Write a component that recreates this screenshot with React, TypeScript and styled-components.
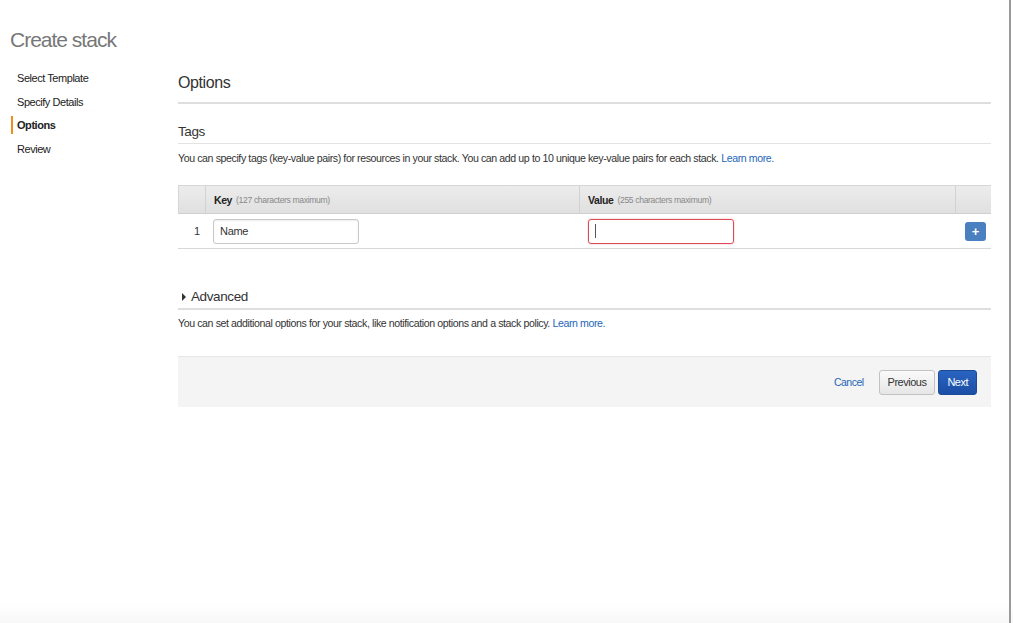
import styled, { createGlobalStyle } from 'styled-components';

const GlobalStyle = createGlobalStyle`
  html, body {
    margin: 0;
    padding: 0;
    background: #ffffff;
    font-family: "Liberation Sans", Arial, sans-serif;
    color: #333333;
  }
  * { box-sizing: border-box; }
`;

const Page = styled.div`
  width: 1013px;
  height: 623px;
  display: flex;
  overflow: hidden;
  background: linear-gradient(to bottom, #ffffff 0, #ffffff 604px, #f7f7f7 623px);
`;

const Content = styled.div`
  width: 1009px;
  padding: 26px 0 0 10px;
  display: flex;
  flex-direction: column;
`;

const Edge = styled.div`
  width: 2px;
  background: #9a9a9a;
`;

const PageTitle = styled.h1`
  margin: 0;
  font-size: 21px;
  font-weight: 300;
  color: #777777;
  letter-spacing: -1px;
  line-height: 28px;
`;

const Body = styled.div`
  display: flex;
  margin-top: 13px;
`;

const Nav = styled.nav`
  width: 168px;
  display: flex;
  flex-direction: column;
  gap: 5.7px;
  padding-top: 2px;
`;

const NavItem = styled.div<{ $active?: boolean }>`
  font-size: 11px;
  line-height: 18px;
  padding-left: 4px;
  border-left: 2px solid ${p => (p.$active ? '#f08d1b' : 'transparent')};
  margin-left: 1px;
  font-weight: ${p => (p.$active ? 700 : 400)};
  color: #222222;
  letter-spacing: -0.45px;
`;

const Main = styled.main`
  width: 813px;
  display: flex;
  flex-direction: column;
`;

const SectionTitle = styled.h2`
  margin: 5px 0 0;
  font-size: 16px;
  font-weight: 400;
  color: #333333;
  line-height: 22px;
  padding-bottom: 8px;
  border-bottom: 2px solid #dedede;
  letter-spacing: -0.4px;
`;

const SubTitle = styled.h3`
  margin: 18px 0 0;
  font-size: 13.5px;
  font-weight: 400;
  color: #333333;
  line-height: 20px;
  padding-bottom: 1px;
  border-bottom: 1px solid #e3e3e3;
  display: flex;
  align-items: center;
  gap: 5px;
  letter-spacing: -0.4px;
`;

const Caret = styled.span`
  width: 0;
  height: 0;
  border-top: 4px solid transparent;
  border-bottom: 4px solid transparent;
  border-left: 4px solid #333333;
  margin-left: 4px;
`;

const Help = styled.p<{ $gap?: number }>`
  margin: ${p => p.$gap ?? 7}px 0 0;
  font-size: 10.6px;
  line-height: 14px;
  color: #333333;
  letter-spacing: -0.4px;
`;

const Link = styled.a`
  color: #1f66b8;
  text-decoration: none;
`;

const Table = styled.div`
  margin-top: 20px;
  display: grid;
  grid-template-columns: 27px 374px 376px 36px;
`;

const HeadCell = styled.div`
  height: 29px;
  background: linear-gradient(to bottom, #ececec, #e0e0e0);
  border-top: 1px solid #d6d6d6;
  border-bottom: 1px solid #cfcfcf;
  border-left: 1px solid #d2d2d2;
  display: flex;
  align-items: center;
  padding-left: 8px;
  font-size: 10.5px;
  color: #222;
  &:first-child { border-left: 1px solid #d6d6d6; }
  &:last-child { border-right: 1px solid #d6d6d6; }
`;

const HeadLabel = styled.b`
  font-weight: 700;
  letter-spacing: -0.4px;
`;

const HeadHint = styled.span`
  color: #888;
  font-size: 8.6px;
  margin-left: 4px;
  letter-spacing: -0.35px;
`;

const Cell = styled.div<{ $align?: string; $pad?: number }>`
  height: 35px;
  border-bottom: 1px solid #d8d8d8;
  display: flex;
  align-items: center;
  justify-content: ${p => p.$align || 'flex-start'};
  padding: 0 8px 0 ${p => p.$pad ?? 8}px;
  font-size: 11px;
`;

const Index = styled(Cell)`
  justify-content: flex-end;
  padding: 0 5px 0 0;
`;

const Input = styled.div<{ $error?: boolean }>`
  width: 146px;
  height: 25px;
  border: 1px solid ${p => (p.$error ? '#dc4a55' : '#c8c8c8')};
  border-radius: 3px;
  box-shadow: ${p =>
    p.$error ? '0 0 2px rgba(220, 74, 85, 0.45)' : 'inset 0 1px 2px rgba(0, 0, 0, 0.08)'};
  display: flex;
  align-items: center;
  padding-left: 6px;
  font-size: 11px;
  letter-spacing: -0.3px;
  color: #333;
`;

const Cursor = styled.span`
  width: 1px;
  height: 14px;
  background: #555;
`;

const PlusButton = styled.button`
  width: 21px;
  height: 19px;
  border: none;
  border-radius: 3px;
  background: #4a7fc0;
  color: #fff;
  font-size: 13px;
  font-weight: 700;
  line-height: 19px;
  padding: 0;
  margin-right: -3px;
  font-family: "Liberation Sans", Arial, sans-serif;
`;

const AdvancedTitle = styled(SubTitle)`
  margin-top: 38px;
  padding-bottom: 1px;
  border-bottom: 2px solid #dedede;
`;

const Footer = styled.div`
  margin-top: 26px;
  height: 51px;
  background: #f4f4f4;
  border-top: 1px solid #e6e6e6;
  display: flex;
  align-items: center;
  justify-content: flex-end;
  padding-right: 14px;
  gap: 3px;
`;

const CancelLink = styled(Link)`
  font-size: 10.5px;
  margin-right: 12px;
  letter-spacing: -0.5px;
`;

const Button = styled.button<{ $primary?: boolean }>`
  height: 25px;
  padding: 0 8px;
  border-radius: 3px;
  font-family: "Liberation Sans", Arial, sans-serif;
  font-size: 11px;
  letter-spacing: -0.5px;
  border: 1px solid ${p => (p.$primary ? '#1a4a98' : '#c2c2c2')};
  background: ${p =>
    p.$primary
      ? 'linear-gradient(to bottom, #2a64c0, #1b4ea6)'
      : 'linear-gradient(to bottom, #fafafa, #e6e6e6)'};
  color: ${p => (p.$primary ? '#ffffff' : '#333333')};
`;

export default function App() {
  return (
    <>
      <GlobalStyle />
      <Page>
        <Content>
          <PageTitle>Create stack</PageTitle>
          <Body>
            <Nav>
              <NavItem>Select Template</NavItem>
              <NavItem>Specify Details</NavItem>
              <NavItem $active>Options</NavItem>
              <NavItem>Review</NavItem>
            </Nav>
            <Main>
              <SectionTitle>Options</SectionTitle>
              <SubTitle>Tags</SubTitle>
              <Help>
                You can specify tags (key-value pairs) for resources in your stack. You can add up to 10 unique
                key-value pairs for each stack. <Link href="#">Learn more.</Link>
              </Help>
              <Table>
                <HeadCell />
                <HeadCell>
                  <HeadLabel>Key</HeadLabel>
                  <HeadHint>(127 characters maximum)</HeadHint>
                </HeadCell>
                <HeadCell>
                  <HeadLabel>Value</HeadLabel>
                  <HeadHint>(255 characters maximum)</HeadHint>
                </HeadCell>
                <HeadCell />
                <Index>1</Index>
                <Cell>
                  <Input>Name</Input>
                </Cell>
                <Cell $pad={9}>
                  <Input $error>
                    <Cursor />
                  </Input>
                </Cell>
                <Cell $align="flex-end">
                  <PlusButton>+</PlusButton>
                </Cell>
              </Table>
              <AdvancedTitle>
                <Caret />
                Advanced
              </AdvancedTitle>
              <Help $gap={6}>
                You can set additional options for your stack, like notification options and a stack policy.{' '}
                <Link href="#">Learn more.</Link>
              </Help>
              <Footer>
                <CancelLink href="#">Cancel</CancelLink>
                <Button>Previous</Button>
                <Button $primary>Next</Button>
              </Footer>
            </Main>
          </Body>
        </Content>
        <Edge />
      </Page>
    </>
  );
}
